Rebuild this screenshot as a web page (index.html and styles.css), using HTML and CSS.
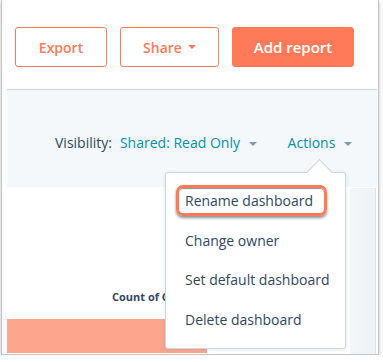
FILE: index.html
```html
<!DOCTYPE html>
<html lang="en">
<head>
  <meta charset="UTF-8">
  <title>Dashboard actions</title>
  <meta name="viewport" content="width=device-width, initial-scale=1.0">
  <link rel="stylesheet" href="styles.css">
</head>
<body>
  <div class="frame">
    <div class="toolbar">
      <button class="btn btn-outline btn-export">Export</button>
      <button class="btn btn-outline btn-share">Share <span class="caret caret-orange"></span></button>
      <button class="btn btn-primary">Add report</button>
    </div>

    <div class="filters">
      <span class="filter-label">Visibility:</span>
      <span class="link">Shared: Read Only <span class="caret"></span></span>
      <span class="link actions">Actions <span class="caret"></span></span>
    </div>

    <div class="content">
      <div class="chart-card">
        <div class="chart-title">Count of Contacts</div>
        <div class="chart-bar"></div>
      </div>
      <div class="side-strip"></div>
    </div>

    <div class="menu">
      <div class="menu-item"><span class="callout">Rename dashboard</span></div>
      <div class="menu-item">Change owner</div>
      <div class="menu-item">Set default dashboard</div>
      <div class="menu-item">Delete dashboard</div>
    </div>
  </div>
</body>
</html>
```

FILE: styles.css
```css
body {
  margin: 0;
  font-family: 'Open Sans', sans-serif;
  background: #fff;
  color: #33475b;
}

.frame {
  position: relative;
  margin-left: 1px;
  width: 376px;
  height: 354px;
  border: 1px solid #c4c4c4;
  border-top: none;
  box-shadow: 0 2px 4px rgba(0,0,0,0.25);
  background: #fff;
  overflow: hidden;
}

.toolbar {
  display: flex;
  align-items: flex-start;
  gap: 13px;
  padding: 27px 0 0 13px;
  height: 89px;
  box-sizing: border-box;
}

.btn {
  height: 40px;
  border-radius: 3px;
  font-family: 'Open Sans', sans-serif;
  font-size: 14px;
  font-weight: 600;
  display: flex;
  align-items: center;
  justify-content: center;
  gap: 6px;
  cursor: pointer;
}

.btn-outline {
  background: #fff;
  border: 1px solid #ff7a59;
  color: #ff7a59;
}

.btn-export {
  width: 92px;
}

.btn-share {
  width: 99px;
}

.btn-primary {
  width: 122px;
  background: #ff7a59;
  border: 1px solid #ff7a59;
  color: #fff;
  font-size: 15px;
}

.caret {
  display: inline-block;
  width: 0;
  height: 0;
  border-left: 4px solid transparent;
  border-right: 4px solid transparent;
  border-top: 4px solid #7c98b6;
  vertical-align: middle;
  margin-left: 5px;
}

.caret-orange {
  border-top-color: #ff7a59;
  margin-left: 0;
}

.filters {
  margin: 0 1px 0 5px;
  height: 98px;
  box-sizing: border-box;
  border-top: 1px solid #cbd6e2;
  background: #f5f8fa;
  display: flex;
  align-items: center;
  padding: 8px 0 0 48px;
  font-size: 14px;
}

.filter-label {
  margin-right: 8px;
}

.link {
  color: #0091ae;
}

.actions {
  margin-left: 31px;
}

.content {
  display: flex;
  height: 167px;
  margin-left: 5px;
}

.chart-card {
  width: 343px;
  background: #fff;
}

.chart-title {
  margin: 102px 0 0 105px;
  width: 53px;
  overflow: hidden;
  font-size: 11px;
  font-weight: 700;
  color: #33475b;
  white-space: nowrap;
}

.chart-bar {
  margin-top: 15px;
  width: 200px;
  height: 34px;
  background: #fea58e;
}

.side-strip {
  width: 25px;
  margin-top: 1px;
  background: linear-gradient(to right, #f3f6f9, #eef2f5);
  border-right: 1px solid #dde3ea;
}

.menu {
  position: absolute;
  left: 163px;
  top: 172px;
  width: 179px;
  height: 167px;
  background: #fff;
  border: 1px solid #cbd6e2;
  border-radius: 3px;
  box-shadow: 0 1px 4px rgba(45,62,80,0.12);
  padding-top: 8px;
  font-size: 14px;
}

.menu::before {
  content: '';
  position: absolute;
  top: -10px;
  left: 144px;
  width: 18px;
  height: 18px;
  background: #fff;
  border-top: 1px solid #cbd6e2;
  border-left: 1px solid #cbd6e2;
  transform: rotate(45deg);
}

.menu-item {
  position: relative;
  height: 39.5px;
  line-height: 39.5px;
  padding-left: 19px;
  white-space: nowrap;
}

.callout {
  position: relative;
}

.callout::after {
  content: '';
  position: absolute;
  left: -9px;
  right: -14px;
  top: -6px;
  bottom: -6px;
  border: 3px solid #ff7a59;
  border-radius: 7px;
  box-shadow: 0 2px 3px rgba(0,0,0,0.45), inset 0 1px 1px rgba(0,0,0,0.45);
}
```
